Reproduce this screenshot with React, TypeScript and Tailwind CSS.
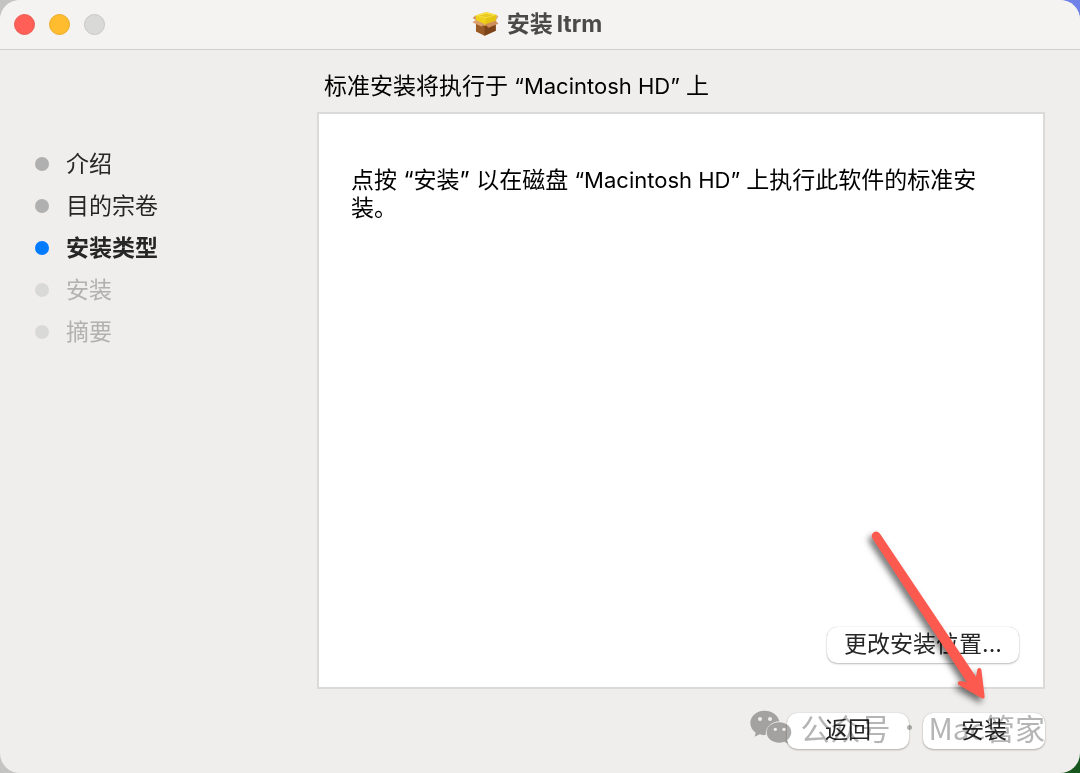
import React from 'react';
import clsx from 'clsx';

type StepState = 'done' | 'current' | 'pending';

interface Step {
  name: string;
  state: StepState;
}

const steps: Step[] = [
  { name: '介绍', state: 'done' },
  { name: '目的宗卷', state: 'done' },
  { name: '安装类型', state: 'current' },
  { name: '安装', state: 'pending' },
  { name: '摘要', state: 'pending' },
];

const PackageIcon: React.FC = () => (
  <svg width="27" height="25" viewBox="96 30 82 76" aria-hidden="true">
    <path d="M108 66 L134 74 L168 66 L168 90 L134 105 L108 92 Z" fill="#9a5a26" />
    <path d="M134 74 L168 66 L168 90 L134 105 Z" fill="#7d431a" />
    <path d="M107 44 L139 33 L171 42 L168 64 L136 74 L108 64 Z" fill="#f0d018" />
    <path d="M107 44 L139 33 L171 42 L138 52 Z" fill="#f7e04a" />
    <path d="M118 44 L140 38 L160 43 L138 49 Z" fill="#e9c920" />
    <path d="M138 52 L171 42 L168 64 L136 74 Z" fill="#e6c414" />
    <path d="M108 57 L97 64 L124 77 L136 70 Z" fill="#d9a06c" />
    <path d="M136 70 L168 60 L176 69 L146 81 Z" fill="#cf8f5a" />
    <path d="M107 44 L98 51 L108 57 Z" fill="#c98c55" />
    <path d="M171 42 L176 47 L168 60 Z" fill="#d9a373" />
  </svg>
);

const WechatIcon: React.FC = () => (
  <svg width="42" height="34" viewBox="0 0 126 102" aria-hidden="true">
    <path
      d="M44 2 C20 2 1 18 1 39 C1 51 7 61 17 68 L14 80 L29 73 C34 75 39 76 47 75 C46 52 64 35 88 34 C84 15 66 2 44 2 Z"
      fill="#aeaeae"
    />
    <path
      d="M88 37 C67 37 50 50 50 67 C50 85 67 98 88 98 C93 98 98 97 103 95 L114 101 L111 90 C119 85 124 76 124 67 C124 50 108 37 88 37 Z"
      fill="#aeaeae"
    />
    <circle cx="30" cy="27" r="6" fill="#ffffff" />
    <circle cx="60" cy="27" r="6" fill="#ffffff" />
    <circle cx="76" cy="58" r="5" fill="#ffffff" />
    <circle cx="102" cy="58" r="5" fill="#ffffff" />
  </svg>
);

const Arrow: React.FC = () => (
  <svg
    className="pointer-events-none absolute right-20 bottom-[58px] z-20 drop-shadow-[-3px_4px_3px_rgba(0,0,0,0.55)]"
    width="134"
    height="188"
    viewBox="48 21 402 564"
    aria-hidden="true"
  >
    <path
      d="M67 55 A13 13 0 0 1 90 41 L378 470 L382 448 Q388 440 394 448 L404 530 Q403 538 395 535 L325 494 Q320 485 330 483 L350 486 Z"
      fill="#fd5a4f"
    />
  </svg>
);

const StepItem: React.FC<Step> = ({ name, state }) => (
  <li
    aria-current={state === 'current' ? 'step' : undefined}
    className={clsx(
      'flex h-[42px] items-center gap-[17px]',
      state === 'done' && 'text-[#262626]',
      state === 'current' && 'font-bold text-[#262626]',
      state === 'pending' && 'text-[#b2b1b0]'
    )}
  >
    <span
      className={clsx(
        'size-3.5 rounded-full',
        state === 'done' && 'bg-[#b0b0b0]',
        state === 'current' && 'bg-[#007aff]',
        state === 'pending' && 'bg-[#d9d9d8]'
      )}
    />
    {name}
  </li>
);

const PushButton: React.FC<{ label: string; className: string }> = ({ label, className }) => (
  <button
    type="button"
    className={clsx(
      'h-9 rounded-[10px] bg-white pb-0.5 text-[#262626] shadow-[0_0_1px_rgba(0,0,0,0.25),0_1px_2px_rgba(0,0,0,0.25)]',
      className
    )}
  >
    {label}
  </button>
);

const App: React.FC = () => {
  return (
    <div className="min-h-screen bg-[linear-gradient(to_right,#c4c4c3_50%,transparent_50%),linear-gradient(to_bottom,#6f80e6_50%,#17571e_50%)] font-[Inter,'Noto_Sans_CJK_SC',sans-serif] text-[23px] leading-7">
      <div className="relative flex min-h-screen flex-col overflow-hidden rounded-[20px] bg-[#efeeec]">
        <header className="grid h-[50px] grid-cols-[1fr_auto_1fr] items-center border-b border-[#d0cfce] bg-[#f4f3f1] px-3.5">
          <div className="flex gap-3.5">
            <button type="button" aria-label="关闭" className="size-[21px] rounded-full border border-[#ee5a52] bg-[#ff5f57]" />
            <button type="button" aria-label="最小化" className="size-[21px] rounded-full border border-[#e9ab2b] bg-[#febc2e]" />
            <button type="button" aria-label="缩放" disabled className="size-[21px] rounded-full border border-[#c6c6c5] bg-[#d9d9d8]" />
          </div>
          <h1 className="flex items-center gap-2 pr-1.5 pb-0.5 font-bold text-[#4b4a48]">
            <PackageIcon />
            <span>
              安装<span className="ml-1">ltrm</span>
            </span>
          </h1>
        </header>

        <div className="flex flex-1">
          <nav className="w-[317px] shrink-0 pt-[93px] pl-[35px]">
            <ol>
              {steps.map((step) => (
                <StepItem key={step.name} {...step} />
              ))}
            </ol>
          </nav>

          <main className="flex flex-1 flex-col pt-[22px] pr-[35px] pb-6 text-black">
            <h2 className="pl-[7px]">
              标准安装将执行于<span className="text-[22px]"> “Macintosh HD” </span>上
            </h2>
            <section className="mt-3 flex flex-1 flex-col justify-between border-2 border-[#dbdad9] bg-white pt-[52px] pr-6 pb-6 pl-8">
              <p className="pr-6">
                点按 “安装” 以在磁盘<span className="text-[22px]"> “Macintosh HD” </span>上执行此软件的标准安装。
              </p>
              <PushButton label="更改安装位置..." className="w-48 self-end" />
            </section>
            <div className="mt-6 flex justify-end gap-3.5">
              <PushButton label="返回" className="w-[122px]" />
              <PushButton label="安装" className="w-[122px]" />
            </div>
          </main>
        </div>

        {/* Account mark laid over the footer buttons */}
        <div className="pointer-events-none absolute right-[35px] bottom-[26px] z-10 flex items-center gap-2 text-[30px] leading-10 whitespace-nowrap text-[#b5b5b5] mix-blend-multiply">
          <WechatIcon />
          <div className="flex gap-3.5 font-['Noto_Sans_CJK_SC',sans-serif]">
            <span>公众号</span>
            <span className="font-[Inter,sans-serif] font-bold">·</span>
            <span>Mac管家</span>
          </div>
        </div>

        <Arrow />
      </div>
    </div>
  );
};

export default App;
